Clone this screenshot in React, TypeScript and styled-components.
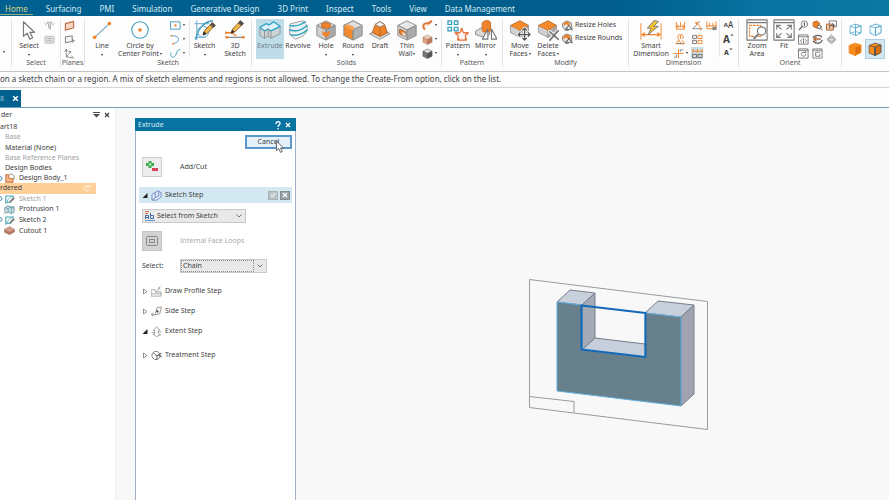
import React from "react";
import styled, { createGlobalStyle, css } from "styled-components";

const ORANGE = "#f08228";
const BLUE = "#3f9bbd";
const INK = "#4a4a4a";

const GlobalStyle = createGlobalStyle`
  * { box-sizing: border-box; }
  html, body, #root { height: 100%; }
  body {
    margin: 0;
    background: #f8f8f9;
    color: #3f3f3f;
    font: 7px/8px "Noto Sans", "Open Sans", sans-serif;
    overflow: hidden;
  }
  button, select { font: inherit; color: inherit; margin: 0; padding: 0; border: 0; background: none; }
  svg { display: block; flex: none; }
`;

const Page = styled.div`
  display: flex;
  flex-direction: column;
  height: 100vh;
  overflow: hidden;
`;

/* ---------- ribbon tabs ---------- */

const TabBar = styled.nav`
  display: flex;
  gap: 18px;
  height: 16px;
  flex: none;
  padding-left: 5px;
  background: linear-gradient(90deg, #00608f 0%, #005d8c 68%, #0872a0 85%, #0a78a4 100%);
  font-size: 8px;
  line-height: 18px;
`;

const TabLink = styled.a<{ $active?: boolean }>`
  height: 15px;
  color: ${(p) => (p.$active ? "#d6cf87" : "#d3e8f1")};
  text-decoration: none;
  white-space: nowrap;
  ${(p) =>
    p.$active &&
    css`
      margin: 0 -5px;
      padding: 0 5px;
      border-bottom: 1px solid #8fae7c;
    `}
`;

/* ---------- ribbon ---------- */

const Ribbon = styled.div`
  display: flex;
  height: 56px;
  flex: none;
  padding: 3px 0 4px;
  background: #fdfdfd;
  border-bottom: 1px solid #c4c4c4;
  overflow: hidden;
`;

const Group = styled.section<{ $w: number }>`
  display: flex;
  flex-direction: column;
  flex: none;
  width: ${(p) => p.$w}px;
  border-right: 1px solid #e2e2e2;
  &:last-child { border-right: 0; }
`;

const GroupBody = styled.div<{ $pad?: number }>`
  display: flex;
  height: 40px;
  padding-left: ${(p) => p.$pad ?? 0}px;
`;

const GroupLabel = styled.div`
  text-align: center;
  color: #5a5a5a;
  white-space: nowrap;
`;

const ToolButton = styled.button<{ $w: number; $active?: boolean }>`
  display: flex;
  flex-direction: column;
  align-items: center;
  flex: none;
  width: ${(p) => p.$w}px;
  height: 40px;
  line-height: 8px;
  text-align: center;
  white-space: nowrap;
  background: ${(p) => (p.$active ? "#bfdde9" : "transparent")};
  color: ${(p) => (p.$active ? "#6c7f89" : "#444")};
`;

const ToolText = styled.span`
  display: flex;
  align-items: center;
  flex-direction: column;
  margin-top: 1px;
`;

const Line = styled.span`
  display: flex;
  align-items: center;
  gap: 1px;
`;

const EdgeBody = styled.div`
  display: flex;
  height: 34px;
  align-items: flex-end;
  padding-left: 3px;
`;

const Caret = styled.i`
  width: 0;
  height: 0;
  border: 1px solid transparent;
  border-top: 2px solid #333;
  border-bottom: 0;
`;

const LowCaret = styled(Caret)`
  margin-top: 4px;
`;

const MiniGrid = styled.div<{ $cols: number; $w: number }>`
  display: grid;
  flex: none;
  grid-template-columns: repeat(${(p) => p.$cols}, 1fr);
  grid-auto-rows: 14px;
  width: ${(p) => p.$w}px;
  justify-items: center;
  align-content: start;
`;

const MiniButton = styled.button<{ $active?: boolean }>`
  display: flex;
  align-items: center;
  justify-content: center;
  gap: 2px;
  min-width: 12px;
  height: 12px;
  background: ${(p) => (p.$active ? "#c9dfe8" : "transparent")};
`;

const InnerRule = styled.span`
  flex: none;
  width: 1px;
  height: 38px;
  background: #e6e6e6;
`;

const Letter = styled.span<{ $size: number; $bold?: boolean }>`
  font-size: ${(p) => p.$size}px;
  font-weight: ${(p) => (p.$bold ? 700 : 500)};
  line-height: 12px;
`;

const LetterRow = styled.span`
  display: flex;
  align-items: flex-start;
  height: 12px;
`;

const TextTools = styled.div`
  display: flex;
  flex-direction: column;
  gap: 1px;
`;

const TextTool = styled.button`
  display: flex;
  align-items: center;
  gap: 2px;
  height: 12px;
  white-space: nowrap;
`;

const ViewGrid = styled.div`
  display: grid;
  grid-template-columns: 20px 20px;
  grid-auto-rows: 20px;
`;

const ViewButton = styled.button<{ $active?: boolean }>`
  display: grid;
  place-items: center;
  background: ${(p) => (p.$active ? "#d5e8f2" : "transparent")};
  border: ${(p) => (p.$active ? "1px solid #a9cfe2" : "0")};
`;

/* ---------- prompt and document tabs ---------- */

const Prompt = styled.div`
  height: 16px;
  flex: none;
  background: #fdfdfd;
  border-bottom: 1px solid #d3d3d3;
  font-size: 8px;
  line-height: 14px;
  white-space: nowrap;
`;

const DocBar = styled.div`
  display: flex;
  height: 20px;
  flex: none;
  background: #fdfdfd;
  border-bottom: 1px solid #6e9fb4;
  padding-top: 2px;
`;

const DocTab = styled.div`
  display: flex;
  align-items: center;
  justify-content: space-between;
  width: 21px;
  padding: 0 2px 0 0;
  background: #00618f;
  color: #9cc6da;
`;

const IconButton = styled.button`
  display: grid;
  place-items: center;
  min-width: 7px;
  height: 8px;
`;

/* ---------- work area ---------- */

const Work = styled.main`
  display: flex;
  flex: 1;
  min-height: 0;
`;

const Tree = styled.aside`
  width: 116px;
  flex: none;
  background: #fff;
  border-right: 1px solid #f0f1f2;
`;

const TreeHead = styled.div`
  display: flex;
  align-items: center;
  height: 14px;
  padding: 0 5px 0 1px;
  gap: 3px;
`;

const Grow = styled.span`
  flex: 1;
`;

const TreeList = styled.ul`
  display: grid;
  grid-auto-rows: 1fr;
  height: 114px;
  margin: 0;
  padding: 0 19px 0 0;
  list-style: none;
`;

const TreeRow = styled.li<{ $indent: number; $dim?: boolean; $on?: boolean }>`
  display: flex;
  align-items: center;
  padding-left: ${(p) => p.$indent}px;
  color: ${(p) => (p.$dim ? "#a2a2a2" : "#3c3c3c")};
  background: ${(p) => (p.$on ? "#fdd09a" : "transparent")};
  white-space: nowrap;
`;

const TreeIcon = styled.span`
  display: flex;
  align-items: center;
  justify-content: space-between;
  width: 17px;
  padding-right: 2px;
  margin-right: 2px;
`;

const Space = styled.div`
  display: flex;
  flex: 1;
  min-width: 0;
  padding: 10px 0 0 19px;
  background: #f8f8f9;
`;

const Dialog = styled.section`
  width: 161px;
  flex: none;
  background: #fff;
  border: solid #a3afc6;
  border-width: 0 1px;
`;

const DialogHead = styled.header`
  display: flex;
  align-items: center;
  gap: 3px;
  height: 13px;
  padding: 0 5px 0 3px;
  margin: 0 -1px;
  background: #0872a0;
  color: #d9ecf5;
`;

const DialogBody = styled.div`
  display: flex;
  flex-direction: column;
  padding: 4px 3px;
`;

const CancelButton = styled.button`
  align-self: flex-end;
  position: relative;
  width: 47px;
  height: 14px;
  background: #e3eff9;
  border: 2px solid #5b97cc;
  line-height: 10px;
`;

const Pointer = styled.svg`
  position: absolute;
  left: 28px;
  top: 3px;
  z-index: 1;
`;

const OptionRow = styled.div<{ $top: number; $dim?: boolean }>`
  display: grid;
  grid-template-columns: 38px 1fr;
  align-items: center;
  margin-top: ${(p) => p.$top}px;
  padding-left: 3px;
  color: ${(p) => (p.$dim ? "#a9a9a9" : "#444")};
`;

const SquareButton = styled.button<{ $dim?: boolean }>`
  display: grid;
  place-items: center;
  width: 20px;
  height: 20px;
  background: ${(p) => (p.$dim ? "#d3d3d3" : "#ededed")};
  border: 1px solid ${(p) => (p.$dim ? "#c4c4c4" : "#cccccc")};
`;

const StepSection = styled.div`
  margin-top: 10px;
`;

const StepList = styled.div`
  margin-top: 8px;
`;

const StepHead = styled.div<{ $open?: boolean; $h: number }>`
  display: flex;
  align-items: center;
  gap: 2px;
  height: ${(p) => p.$h}px;
  padding: 0 2px 0 3px;
  background: ${(p) => (p.$open ? "#d3e8f1" : "transparent")};
`;

const StepToggle = styled.button`
  display: flex;
  align-items: center;
  gap: 3px;
  white-space: nowrap;
`;

const StepBtn = styled.button<{ $strong?: boolean }>`
  display: grid;
  place-items: center;
  width: 10px;
  height: 9px;
  background: ${(p) => (p.$strong ? "#9ba3a8" : "#bcc5ca")};
  border: 1px solid ${(p) => (p.$strong ? "#858d92" : "#a8b1b6")};
`;

const SelectRow = styled.div`
  margin-top: 6px;
  padding-left: 3px;
`;

const SelectBox = styled.div<{ $w: number }>`
  display: flex;
  align-items: center;
  width: ${(p) => p.$w}px;
  height: 14px;
  padding: 0 3px 0 1px;
  background: #e9e9e9;
  border: 1px solid #c9c9c9;
`;

const SelectInput = styled.select<{ $focus?: boolean }>`
  appearance: none;
  flex: 1;
  min-width: 0;
  height: 10px;
  padding: 0 1px;
  margin-right: 4px;
  outline: ${(p) => (p.$focus ? "1px dotted #8a8a8a" : "0")};
`;

const Viewport = styled.div`
  flex: 1;
  min-width: 0;
  padding: 160px 0 0 232px;
  overflow: hidden;
`;

/* ---------- drawings ---------- */

type BoxProps = { top: string; left: string; right: string; line?: string; s?: number; children?: React.ReactNode };

const Cube = ({ top, left, right, line = "#888", s = 22, children }: BoxProps) => (
  <svg width={s} height={s} viewBox="0 0 24 24" stroke={line} strokeWidth="1" strokeLinejoin="round">
    <path d="M12 2 22 7 12 12 2 7Z" fill={top} />
    <path d="M2 7 12 12V23L2 18Z" fill={left} />
    <path d="M22 7 12 12V23L22 18Z" fill={right} />
    {children}
  </svg>
);

const Svg = ({ s = 22, children }: { s?: number; children: React.ReactNode }) => (
  <svg width={s} height={s} viewBox="0 0 24 24" fill="none" strokeLinejoin="round" strokeLinecap="round">
    {children}
  </svg>
);

const ArrowPath = "M6 3V19L10 15.5L13 22L16 20.5L13 14.5H18Z";
const pencil = (
  <g strokeWidth="1">
    <path d="M10 17 12 12 20 4 23 7 15 15Z" fill="#efb64b" stroke="#8d6423" />
    <path d="M18 6 20 4 23 7 21 9Z" fill="#555" stroke="#444" />
    <path d="M10 17 11 14 13 16Z" fill="#333" stroke="#333" />
  </g>
);

const SelectIcon = () => <Svg><path d={ArrowPath} fill="#fff" stroke="#777" strokeWidth="1.3" /></Svg>;
const LineIcon = () => (
  <Svg>
    <path d="M4 20 20 5" stroke="#7fa6b8" strokeWidth="1.3" />
    <circle cx="4" cy="20" r="2" fill={ORANGE} /><circle cx="20" cy="5" r="2" fill={ORANGE} />
  </Svg>
);
const CircleIcon = () => (
  <Svg><circle cx="12" cy="12" r="9" stroke={BLUE} strokeWidth="1.2" /><circle cx="12" cy="12" r="2" fill={ORANGE} /></Svg>
);
const SketchIcon = () => (
  <Svg>
    <path d="M3 2V22M1 5H16M1 20H12" stroke="#7eb9d2" strokeWidth="1.3" />
    <path d="M2 22C4 12 9 4 20 2" stroke={BLUE} strokeWidth="1.6" />
    <circle cx="10" cy="14" r="6" stroke="#7eb9d2" strokeWidth="1.2" />
    {pencil}
  </Svg>
);
const Sketch3DIcon = () => (
  <Svg>
    <path d="M2 20H22" stroke="#888" strokeWidth="1.4" />
    <path d="M3 15H8L13 18" stroke={ORANGE} strokeWidth="1.4" />
    <circle cx="2.5" cy="15" r="1.5" fill={ORANGE} /><circle cx="3" cy="20" r="1.5" fill={ORANGE} /><circle cx="21" cy="20" r="1.5" fill={ORANGE} />
    <g transform="translate(-2 -2)">{pencil}</g>
  </Svg>
);
const ExtrudeIcon = () => (
  <Svg>
    <path d="M1 9V18L6 21 10 18.500 13 21 23 16V8L13 13 10 11 6 13Z" fill="#cfd4d7" stroke="#8a8f92" />
    <path d="M1 9 8 5 11 6.500 16 3 23 8 13 13 10 11 6 13Z" fill="#def1f7" stroke="#2aa3c8" strokeWidth="1.4" />
    <path d="M6 13V21M13 13V21M10 11V18" stroke="#8a8f92" />
  </Svg>
);
const RevolveIcon = () => (
  <Svg>
    <path d="M4 5 18 2 22 8C23 15 18 20 9 22L3 17Z" fill="#edf1f3" stroke="#999" />
    <path d="M3 7C9 9 14 7 20 3M3 12C9 14 16 12 22 7M4 17C9 19 17 17 22 12" stroke="#26a0bd" strokeWidth="1.5" />
  </Svg>
);
const HoleIcon = () => (
  <Cube top="#e1e1e1" left="#cfcfcf" right="#a9a9a9">
    <ellipse cx="12" cy="7" rx="5" ry="3" fill={ORANGE} stroke="#c46418" />
    <path d="M8 13 12 15 16 13V17L12 20 8 17Z" fill={ORANGE} stroke="none" />
  </Cube>
);
const RoundIcon = () => (
  <Cube top="#e4e4e4" left="#f1892d" right="#aeb1b3">
    <path d="M2 8C4 5 6 5 8 6L14 9C13 10 12 11 12 13L2 8Z" fill="#f6a050" stroke="none" />
    <path d="M8 6 14 9 22 7 12 2 4 6Z" fill="#e0e0e0" stroke="none" />
    <path d="M2 7 12 2 22 7" fill="none" />
  </Cube>
);
const DraftIcon = () => (
  <Svg>
    <path d="M1 16 12 11 23 16 12 22Z" fill="#dedede" stroke="#888" />
    <path d="M7 6 12 3 17 6 20 15 12 19 4 15Z" fill={ORANGE} stroke="#a55d26" />
    <path d="M7 6 12 9 17 6 12 3Z" fill="#f7f0e8" stroke="#888" /><path d="M12 9V19" stroke="#b66729" />
  </Svg>
);
const ThinIcon = () => (
  <Cube top="#e7e7e7" left="#d7d7d7" right="#a9a9a9">
    <path d="M4 11 10 14V19L4 16Z" fill={ORANGE} stroke="#9c5c2a" />
    <path d="M7 14 10 16V19L7 17Z" fill="#eee" stroke="none" />
  </Cube>
);
const PatternIcon = () => (
  <Svg>
    <g fill="#e6f5f8" stroke="#329bb5" strokeWidth="1.3">
      <path d="M1 2H5V6H1ZM8 2H12V6H8ZM1 9H5V13H1ZM8 9H12V13H8Z" />
    </g>
    <path d="M16 11 18 15 23 15 20 18 21 23H12L12 18 9 15H14Z" stroke="#ec7643" strokeWidth="1.5" fill="#fff7f1" />
    <g fill="#ec7643"><circle cx="16" cy="11" r="1.3" /><circle cx="22" cy="15.500" r="1.3" /><circle cx="20.500" cy="22" r="1.3" /><circle cx="12.500" cy="22" r="1.3" /><circle cx="10" cy="15.500" r="1.3" /></g>
  </Svg>
);
const MirrorIcon = () => (
  <Svg>
    <path d="M1 13 8 9 16 13V17L9 20 1 17Z" fill="#d9d9d9" stroke="#888" />
    <path d="M8 4C10 1 16 1 17 4V13C14 15 10 15 8 13Z" fill={ORANGE} stroke="#c66b20" />
    <path d="M14 11V22H8ZM18 11V22H24Z" fill="#fff" stroke="#777" strokeWidth="1.2" />
  </Svg>
);
const FaceBase = (
  <>
    <path d="M2 7 12 2 21 7V15L12 20 2 15Z" fill="#d1d1d1" stroke="#999" />
    <path d="M12 12 21 7V15L12 20Z" fill="#adadad" stroke="#999" />
    <path d="M2 7 12 2 21 7 12 12Z" fill="#f58a2a" stroke="#d17424" />
  </>
);
const movePath = "M17 10V23M10 17H23M15 12 17 10 19 12M15 21 17 23 19 21M12 15 10 17 12 19M21 15 23 17 21 19";
const MoveIcon = () => (
  <Svg>{FaceBase}<path d={movePath} stroke="#fff" strokeWidth="3" /><path d={movePath} stroke="#555" strokeWidth="1.4" /></Svg>
);
const DeleteIcon = () => (
  <Svg>{FaceBase}<path d="M14 14 23 22M23 13 14 23" stroke="#fff" strokeWidth="4" /><path d="M14 14 23 22M23 13 14 23" stroke="#777" strokeWidth="2" /></Svg>
);
const ResizeIcon = ({ round }: { round?: boolean }) => (
  <Svg s={11}>
    <path d="M2 7 10 2 20 6 22 20 7 22 2 16Z" fill="#e6e6e6" stroke="#777" strokeWidth="2" />
    <path d={round ? "M3 8C10 0 19 4 19 13L13 16C14 10 9 8 3 14Z" : "M4 7C8 2 17 3 17 11L12 13C12 8 8 8 4 14Z"} fill={ORANGE} />
    <path d="M9 22 15 11 22 22M9 17V22H14" stroke="#555" strokeWidth="2" />
  </Svg>
);
const SmartIcon = () => (
  <Svg>
    <path d="M1 5V22M23 5V22" stroke={ORANGE} />
    <path d="M2 17H22M5 15 2 17 5 19M19 15 22 17 19 19" stroke={ORANGE} strokeWidth="1.2" />
    <path d="M15 2 8 10H12L9 17 20 8H15L20 3Z" fill="#f2c033" stroke="#777" />
  </Svg>
);
const WindowIcon = ({ fit }: { fit?: boolean }) => (
  <Svg>
    <path d="M1 1H23V23H1ZM1 4H23" stroke="#777" strokeWidth="1.2" fill="#fff" />
    {fit ? (
      <path d="M9 11 4 7M4 11V7H8M15 11 20 7M20 11V7H16M9 16 4 20M4 16V20H8M15 16 20 20M20 16V20H16" stroke="#777" strokeWidth="1.2" />
    ) : (
      <>
        <path d="M4 7H16V19H4Z" stroke={ORANGE} strokeWidth="1.2" strokeDasharray="2 2" />
        <circle cx="17" cy="13" r="4.500" fill="#fff" stroke="#777" strokeWidth="1.3" />
        <path d="M13 17 9 21" stroke="#777" strokeWidth="2" />
      </>
    )}
  </Svg>
);

const miniPaths: Record<string, React.ReactNode> = {
  filter: <><path d="M7 5H17L14 11V20L10 17V11Z" fill="#ddd" stroke="#aaa" strokeWidth="2" /><path d="M2 7 5 11M22 7 19 11" stroke="#aaa" strokeWidth="2" /></>,
  card: <><rect x="2" y="5" width="20" height="15" rx="2" fill="#e5e5e5" stroke="#b9b9b9" strokeWidth="2" /><path d="M7 10H17M7 15H17" stroke="#aaa" strokeWidth="2" /></>,
  plane: <path d="M3 8 21 3V17L3 22Z" fill="#f5d5bf" stroke="#bd6d47" strokeWidth="2.5" />,
  plane2: <path d="M4 6 18 4V16L4 19ZM18 13 23 14 18 18" fill="#f4f4f4" stroke="#777" strokeWidth="2" />,
  axes: <path d="M5 3V19L20 22M5 19 15 8M2 7 5 3 8 7M11 8H15V12M17 18 21 22" stroke="#777" strokeWidth="2" strokeDasharray="5 3" />,
  rect: <><path d="M2 4H22V20H2Z" stroke={BLUE} strokeWidth="2" /><circle cx="12" cy="12" r="2.5" fill={ORANGE} /></>,
  arc: <><path d="M3 4C22 1 24 18 8 21" stroke={BLUE} strokeWidth="2" /><circle cx="3" cy="4" r="2" fill={ORANGE} /><circle cx="7" cy="21" r="2" fill={ORANGE} /></>,
  curve: <path d="M2 11C0 20 7 24 12 16C17 8 14 4 22 3" stroke={BLUE} strokeWidth="2" />,
  sweep: <><path d="M5 19C0 12 6 5 14 8L20 3" stroke="#d9743c" strokeWidth="5" /><path d="M5 15C5 9 10 9 15 11" stroke="#fac29b" strokeWidth="3" /></>,
  dimA: <path d="M3 5V20H21V5M3 14H21M7 11 3 14 7 17M17 11 21 14 17 17M12 6V14" stroke={ORANGE} strokeWidth="2" />,
  dimB: <><path d="M2 19 17 3M2 19H22" stroke="#888" strokeWidth="2" /><path d="M8 6C15 8 19 13 19 22M13 5 8 6 11 11" stroke={ORANGE} strokeWidth="2" /></>,
  dimC: <><path d="M2 4V19H22V4M2 13H22M8 7V13M15 7V13" stroke={ORANGE} strokeWidth="2" /><rect x="14" y="15" width="9" height="7" fill="#888" /></>,
  dimD: <><path d="M7 10A6 6 0 1 1 17 10M12 3V10M3 21 8 12 12 19M2 21H21L16 14" stroke={ORANGE} strokeWidth="2" /><path d="M6 21H18" stroke="#888" strokeWidth="2" /></>,
  dimE: <><path d="M2 3H10V10H2ZM2 14H10V21H2Z" fill="#eee" stroke="#777" strokeWidth="2" /><path d="M14 3H22V10H14ZM14 14H22V21H14Z" stroke={ORANGE} strokeWidth="2" /></>,
  dimF: <><path d="M12 3V21M2 12H22" stroke={ORANGE} strokeWidth="2" /><path d="M3 20H8V15M16 8V4H22" stroke="#888" strokeWidth="2" /></>,
  dimG: <><path d="M2 3V10M22 3V10M2 7H22M12 3V10" stroke={ORANGE} strokeWidth="2" /><path d="M2 14H10V21H2ZM14 14H22V21H14Z" fill="#ddd" stroke="#666" strokeWidth="2" /></>,
  lens: <><circle cx="14" cy="9" r="7" stroke="#777" strokeWidth="2" /><path d="M9 14 3 21M14 6V12" stroke="#555" strokeWidth="2.5" /></>,
  lensCube: <><path d="M3 5 10 2 16 6V15L10 18 3 14Z" fill={ORANGE} stroke="#b86622" strokeWidth="2" /><circle cx="16" cy="15" r="4" fill="#fff" stroke="#555" strokeWidth="2" /><path d="M19 18 22 22" stroke="#555" strokeWidth="2" /></>,
  prev: <><path d="M8 2H23V15H8Z" stroke="#777" strokeWidth="2" /><path d="M2 9H16V22H2Z" fill="#f7c7a0" stroke="#9e5c31" strokeWidth="2" /><path d="M8 18V12H18M15 8 19 12 15 16" stroke="#555" strokeWidth="2" /></>,
  pan: <path d="M2 2H22V22H2ZM2 6H22M12 10V20M8 12 5 15 8 18M16 12 19 15 16 18" stroke="#777" strokeWidth="2" />,
  spin: <><path d="M3 7C8 2 16 2 21 6M3 16C10 23 19 21 22 14" stroke="#666" strokeWidth="3" /><path d="M5 11H18M9 7 4 11 9 15" stroke="#b66a43" strokeWidth="3" /></>,
  orbit: <path d="M12 2 16 7 22 12 16 17 12 22 8 17 2 12 8 7ZM7 8H17V16H7Z" fill="#ddd" stroke="#999" strokeWidth="2" />,
  refresh: <><path d="M2 2H22V22H2ZM2 5H22" stroke="#777" strokeWidth="2" /><path d="M16 10C9 6 5 13 9 17C14 20 17 16 17 14M13 10H17V7" stroke="#777" strokeWidth="2" /></>,
  rotate: <><path d="M2 2H22V22H2ZM2 5H22" stroke="#777" strokeWidth="2" strokeDasharray="5 2" /><path d="M17 9H8V18H17V14" stroke="#777" strokeWidth="2" /></>,
};
const Mini = ({ name }: { name: string }) => <Svg s={11}>{miniPaths[name]}</Svg>;
const GreyCube = ({ dark }: { dark?: boolean }) => (
  <Cube s={11} top={dark ? "#ddd" : "#f0d1bc"} left={dark ? "#777" : "#e0a17d"} right={dark ? "#555" : "#b97856"} line={dark ? "#444" : "#a2765e"} />
);
const Mark = ({ d }: { d: string }) => (
  <svg width="4" height="4" viewBox="0 0 4 4"><path d={d} stroke="#777" fill="none" /></svg>
);
const ViewCube = ({ kind }: { kind: "wire" | "hidden" | "solid" | "edge" }) => {
  const wire = kind === "wire" || kind === "hidden";
  return (
    <svg width={wire ? 13 : 14} height={wire ? 13 : 14} viewBox="0 0 24 24" strokeWidth="1.5" strokeLinejoin="round" stroke={wire ? "#58a9c9" : kind === "edge" ? "#6d5847" : "#ee8a22"}>
      <path d="M2 6 12 2 22 5V18L12 23 2 19Z" fill={wire ? "#fff" : "#fb8b17"} />
      <path d="M12 9 22 5V18L12 23Z" fill={wire ? "#fff" : "#df6f0b"} />
      <path d="M2 6 12 9 22 5M12 9V23" fill="none" />
      {kind === "wire" && <path d="M12 2V16L2 19M12 16 22 18" fill="none" />}
      {kind === "hidden" && <path d="M12 2V16L2 19M12 16 22 18" fill="none" strokeDasharray="2 3" />}
      {kind === "edge" && <path d="M12 9V23" stroke="#456" strokeWidth="2.5" />}
    </svg>
  );
};

const Cross = ({ s = 6, color = "#444" }: { s?: number; color?: string }) => (
  <svg width={s} height={s} viewBox="0 0 6 6"><path d="M1 1 5 5M5 1 1 5" stroke={color} strokeWidth="1.3" /></svg>
);
const SketchMini = () => (
  <Svg s={10}>
    <path d="M2 5V22M2 5H20M2 20H13" stroke="#41a2ab" strokeWidth="2.5" />
    <path d="M5 20C7 10 12 7 21 6" stroke="#55b3ba" strokeWidth="2" />
    <path d="M11 18 20 8 23 11 14 20Z" fill="#777" stroke="#777" />
  </Svg>
);
const BodyMini = () => (
  <Svg s={10}><path d="M2 4H9V12L19 14V22H2Z" fill="#f6b487" stroke="#c8743e" strokeWidth="2.5" /><path d="M12 4 17 2 22 7V15" stroke="#777" strokeWidth="2" /></Svg>
);
const ProtrusionMini = () => (
  <Svg s={11}><path d="M2 8 8 4 14 6 22 6V18L16 21 10 18 3 20Z" fill="#d2dfe2" stroke="#7a9ca5" strokeWidth="2" /><path d="M3 8 9 10 14 7 21 9M9 10V18M16 10V20" stroke="#5ba2b4" strokeWidth="2" /></Svg>
);
const CutoutMini = () => (
  <Svg s={11}><path d="M1 10 12 4 23 10V15L12 21 1 16Z" fill="#b87460" stroke="#9c7468" /><path d="M1 10 12 4 23 10 12 15Z" fill="#d5a18e" stroke="#ad8576" /></Svg>
);
const Bullet = () => <svg width="3" height="5" viewBox="0 0 3 5"><circle cx="0" cy="2.5" r="2" fill="none" stroke="#4d93b5" /></svg>;
const Triangle = ({ open }: { open?: boolean }) => (
  <svg width="6" height="7" viewBox="0 0 6 7">
    {open ? <path d="M5.5 1V6H0.5Z" fill="#222" /> : <path d="M1.5 1 5 3.5 1.5 6Z" fill="none" stroke="#777" strokeWidth=".8" />}
  </svg>
);
const Chevron = () => <svg width="6" height="4" viewBox="0 0 6 4"><path d="M.5.5 3 3 5.5.5" fill="none" stroke="#777" /></svg>;
const PlusMinus = () => (
  <svg width="14" height="14" viewBox="0 0 14 14"><path d="M5 1V8M1 4.500H9" stroke="#3daa4c" strokeWidth="3" /><path d="M5 3V6M3.500 4.500H6.500" stroke="#c5f2c8" /><rect x="7" y="8" width="6" height="3" fill="#d94254" /></svg>
);
const LoopIcon = () => (
  <svg width="12" height="10" viewBox="0 0 12 10" fill="none" stroke="#888"><rect x=".5" y=".5" width="11" height="9" rx="1" /><rect x="3.5" y="3.5" width="5" height="3" /></svg>
);
const StepSketch = () => <Svg s={11}><path d="M3 9 15 2 22 6V15L13 22H3ZM9 7V17L17 13V3M9 17 3 22" fill="#e8f0fa" stroke="#7185c5" strokeWidth="2" /></Svg>;
const ABIcon = () => (
  <svg width="12" height="12" viewBox="0 0 12 12" fill="none">
    <path d="M1.500 9V5.500H4.500V9M1.500 7.500H4.500M6.500 3V8.500H9.500V5.500H6.500" stroke="#456ea8" /><path d="M1 1.500H5M1 3.500H4" stroke="#dd6847" /><path d="M1 10.500H11" stroke="#5a9ad2" />
  </svg>
);
const DrawIcon = () => <Svg s={11}><path d="M1 8H9V13H22V22H1ZM1 17H22M12 13 20 1M16 4 20 7" stroke="#999" strokeWidth="1.8" /></Svg>;
const SideIcon = () => <Svg s={11}><path d="M1 19H9L13 4 23 2 19 17 9 19M4 15 1 19 5 22" stroke="#888" strokeWidth="1.8" /><circle cx="14" cy="12" r="2.5" fill="#444" /></Svg>;
const ExtentIcon = () => <Svg s={11}><path d="M5 10 12 2 20 9H16V17L21 19 12 23 4 18H8V10ZM2 14H6M18 13H23" stroke="#999" strokeWidth="1.8" strokeDasharray="4 1" /></Svg>;
const TreatIcon = () => <Svg s={11}><circle cx="11" cy="12" r="9" stroke="#777" strokeWidth="2" /><path d="M6 7 13 13 22 7M13 13V20M16 11 23 15" stroke="#555" strokeWidth="2" /></Svg>;

const Model = () => (
  <svg width="181" height="154" viewBox="528 278 181 154" fill="none" strokeLinejoin="round">
    <path d="M529.5 279.5 707.5 301.5V429.5L529.5 407.5Z" stroke="#999b9e" />
    <path d="M529.5 396.5 574 401.5V412.5" stroke="#999b9e" />
    <g stroke="#777f8b" strokeWidth="1">
      <path d="M557 302 570 290 595 293 582 305Z" fill="#c8d0dc" />
      <path d="M582 305 595 293V338L582 350Z" fill="#a3aab5" />
      <path d="M582 350 595 338 645 344V357Z" fill="#c6cfdb" />
      <path d="M645 313 658 301 694 305 681 317Z" fill="#c8d0dc" />
      <path d="M681 317 694 305V394L681 406Z" fill="#a0a4b0" />
    </g>
    <path d="M557 302 582 305V350L645 357V313L681 317V406L557 391Z" fill="#687f8c" stroke="#5fafe0" />
    <path d="M581.5 305.5 645.5 313V357L581.5 349.5Z" stroke="#1468b8" strokeWidth="2" />
  </svg>
);

/* ---------- composition ---------- */

type ToolProps = { w: number; icon: React.ReactNode; lines: string[]; caret?: "low" | "inline"; active?: boolean };

const Tool = ({ w, icon, lines, caret, active }: ToolProps) => (
  <ToolButton type="button" $w={w} $active={active}>
    {icon}
    <ToolText>
      {lines.map((t, i) => (
        <Line key={t}>
          {t}
          {caret === "inline" && i === lines.length - 1 && <Caret />}
        </Line>
      ))}
      {caret === "low" && <LowCaret />}
    </ToolText>
  </ToolButton>
);

const MiniTool = ({ name, caret, active }: { name: string; caret?: boolean; active?: boolean }) => (
  <MiniButton type="button" aria-label={name} $active={active}>
    {name === "cubeA" ? <GreyCube /> : name === "cubeB" ? <GreyCube dark /> : <Mini name={name} />}
    {caret && <Caret />}
  </MiniButton>
);

const tabs = ["Home", "Surfacing", "PMI", "Simulation", "Generative Design", "3D Print", "Inspect", "Tools", "View", "Data Management"];

export default function App() {
  return (
    <Page>
      <GlobalStyle />
      <TabBar>
        {tabs.map((t, i) => <TabLink key={t} href="#" $active={i === 0}>{t}</TabLink>)}
      </TabBar>

      <Ribbon>
        <Group $w={12}><EdgeBody><Caret /></EdgeBody></Group>
        <Group $w={49}>
          <GroupBody $pad={3}>
            <Tool w={28} icon={<SelectIcon />} lines={["Select"]} caret="low" />
            <MiniGrid $cols={1} $w={12}><MiniTool name="filter" /><MiniTool name="card" /></MiniGrid>
          </GroupBody>
          <GroupLabel>Select</GroupLabel>
        </Group>
        <Group $w={24}>
          <GroupBody $pad={1}>
            <MiniGrid $cols={1} $w={14}><MiniTool name="plane" /><MiniTool name="plane2" /><MiniTool name="axes" /></MiniGrid>
          </GroupBody>
          <GroupLabel>Planes</GroupLabel>
        </Group>
        <Group $w={167}>
          <GroupBody $pad={4}>
            <Tool w={26} icon={<LineIcon />} lines={["Line"]} caret="low" />
            <Tool w={50} icon={<CircleIcon />} lines={["Circle by", "Center Point"]} caret="inline" />
            <MiniGrid $cols={1} $w={24}><MiniTool name="rect" caret /><MiniTool name="arc" caret /><MiniTool name="curve" caret /></MiniGrid>
            <InnerRule />
            <Tool w={29} icon={<SketchIcon />} lines={["Sketch"]} caret="low" />
            <Tool w={32} icon={<Sketch3DIcon />} lines={["3D", "Sketch"]} />
          </GroupBody>
          <GroupLabel>Sketch</GroupLabel>
        </Group>
        <Group $w={190}>
          <GroupBody $pad={4}>
            <Tool w={28} icon={<ExtrudeIcon />} lines={["Extrude"]} active />
            <Tool w={28} icon={<RevolveIcon />} lines={["Revolve"]} />
            <Tool w={28} icon={<HoleIcon />} lines={["Hole"]} caret="low" />
            <Tool w={26} icon={<RoundIcon />} lines={["Round"]} caret="low" />
            <Tool w={28} icon={<DraftIcon />} lines={["Draft"]} />
            <Tool w={26} icon={<ThinIcon />} lines={["Thin", "Wall"]} caret="inline" />
            <MiniGrid $cols={1} $w={18}><MiniTool name="sweep" caret /><MiniTool name="cubeA" caret /><MiniTool name="cubeB" caret /></MiniGrid>
          </GroupBody>
          <GroupLabel>Solids</GroupLabel>
        </Group>
        <Group $w={61}>
          <GroupBody $pad={2}>
            <Tool w={28} icon={<PatternIcon />} lines={["Pattern"]} caret="low" />
            <Tool w={27} icon={<MirrorIcon />} lines={["Mirror"]} caret="low" />
          </GroupBody>
          <GroupLabel>Pattern</GroupLabel>
        </Group>
        <Group $w={126}>
          <GroupBody $pad={3}>
            <Tool w={28} icon={<MoveIcon />} lines={["Move", "Faces"]} caret="inline" />
            <Tool w={28} icon={<DeleteIcon />} lines={["Delete", "Faces"]} caret="inline" />
            <TextTools>
              <TextTool type="button"><ResizeIcon />Resize Holes</TextTool>
              <TextTool type="button"><ResizeIcon round />Resize Rounds</TextTool>
            </TextTools>
          </GroupBody>
          <GroupLabel>Modify</GroupLabel>
        </Group>
        <Group $w={110}>
          <GroupBody $pad={3}>
            <Tool w={38} icon={<SmartIcon />} lines={["Smart", "Dimension"]} />
            <MiniGrid $cols={1} $w={20}><MiniTool name="dimA" /><MiniTool name="dimD" /><MiniTool name="dimF" caret /></MiniGrid>
            <MiniGrid $cols={2} $w={29}>
              <MiniTool name="dimB" /><MiniTool name="dimC" />
              <MiniTool name="dimE" /><span />
              <MiniTool name="dimG" active />
            </MiniGrid>
            <InnerRule />
            <MiniGrid $cols={1} $w={17}>
              <MiniButton type="button" aria-label="Font"><LetterRow><Letter $size={6} $bold>A</Letter><Letter $size={8}>A</Letter></LetterRow></MiniButton>
              <MiniButton type="button" aria-label="Larger text"><LetterRow><Letter $size={10} $bold>A</Letter><Mark d="M1 3 2 1 3 3" /></LetterRow></MiniButton>
              <MiniButton type="button" aria-label="Smaller text"><LetterRow><Letter $size={7} $bold>A</Letter><Mark d="M1 1 2 3 3 1" /></LetterRow></MiniButton>
            </MiniGrid>
          </GroupBody>
          <GroupLabel>Dimension</GroupLabel>
        </Group>
        <Group $w={103}>
          <GroupBody $pad={4}>
            <Tool w={28} icon={<WindowIcon />} lines={["Zoom", "Area"]} />
            <Tool w={26} icon={<WindowIcon fit />} lines={["Fit"]} />
            <MiniGrid $cols={3} $w={41}>
              {["lens", "lensCube", "prev", "pan", "spin", "orbit", "refresh", "rotate"].map((n) => <MiniTool key={n} name={n} />)}
            </MiniGrid>
          </GroupBody>
          <GroupLabel>Orient</GroupLabel>
        </Group>
        <Group $w={47}>
          <GroupBody $pad={3}>
            <ViewGrid>
              <ViewButton type="button" aria-label="Wireframe"><ViewCube kind="wire" /></ViewButton>
              <ViewButton type="button" aria-label="Hidden edges"><ViewCube kind="hidden" /></ViewButton>
              <ViewButton type="button" aria-label="Shaded"><ViewCube kind="solid" /></ViewButton>
              <ViewButton type="button" aria-label="Shaded with edges" $active><ViewCube kind="edge" /></ViewButton>
            </ViewGrid>
          </GroupBody>
        </Group>
      </Ribbon>

      <Prompt>on a sketch chain or a region. A mix of sketch elements and regions is not allowed. To change the Create-From option, click on the list.</Prompt>
      <DocBar>
        <DocTab>8<IconButton type="button" aria-label="Close document"><Cross s={7} color="#fff" /></IconButton></DocTab>
      </DocBar>

      <Work>
        <Tree>
          <TreeHead>
            der<Grow />
            <IconButton type="button" aria-label="Panel options"><svg width="7" height="6" viewBox="0 0 7 6"><path d="M0 .5H7" stroke={INK} /><path d="M0 2H7L3.5 5.5Z" fill={INK} /></svg></IconButton>
            <IconButton type="button" aria-label="Close panel"><Cross /></IconButton>
          </TreeHead>
          <TreeList>
            <TreeRow $indent={0}>art18</TreeRow>
            <TreeRow $indent={5} $dim>Base</TreeRow>
            <TreeRow $indent={5}>Material (None)</TreeRow>
            <TreeRow $indent={5} $dim>Base Reference Planes</TreeRow>
            <TreeRow $indent={5}>Design Bodies</TreeRow>
            <TreeRow $indent={0}><TreeIcon><Bullet /><BodyMini /></TreeIcon>Design Body_1</TreeRow>
            <TreeRow $indent={0} $on>rdered<Grow /><svg width="14" height="7" viewBox="0 0 14 7"><path d="M7 2A2.5 2.5 0 1 0 7 5M5 2H8V0" fill="none" stroke="#fff3e3" /></svg></TreeRow>
            <TreeRow $indent={0} $dim><TreeIcon><Bullet /><SketchMini /></TreeIcon>Sketch 1</TreeRow>
            <TreeRow $indent={0}><TreeIcon><span /><ProtrusionMini /></TreeIcon>Protrusion 1</TreeRow>
            <TreeRow $indent={0}><TreeIcon><Bullet /><SketchMini /></TreeIcon>Sketch 2</TreeRow>
            <TreeRow $indent={0}><TreeIcon><span /><CutoutMini /></TreeIcon>Cutout 1</TreeRow>
          </TreeList>
        </Tree>

        <Space>
          <Dialog aria-label="Extrude">
            <DialogHead>
              Extrude<Grow />
              <IconButton type="button" aria-label="Help"><svg width="6" height="9" viewBox="0 0 6 9"><path d="M1 3C1 0 5 0 5 2.5C5 4 3 4 3 6M3 7V8.500" fill="none" stroke="#fff" strokeWidth="1.3" /></svg></IconButton>
              <IconButton type="button" aria-label="Close"><Cross color="#fff" /></IconButton>
            </DialogHead>
            <DialogBody>
              <CancelButton type="button">
                Cancel
                <Pointer width="10" height="13" viewBox="4 1 16 22"><path d={ArrowPath} fill="#fff" stroke="#555" strokeWidth="1.5" /></Pointer>
              </CancelButton>
              <OptionRow $top={8}>
                <SquareButton type="button" aria-labelledby="addcut-label"><PlusMinus /></SquareButton>
                <span id="addcut-label">Add/Cut</span>
              </OptionRow>
              <StepSection>
                <StepHead $open $h={16}>
                  <StepToggle type="button" aria-expanded="true"><Triangle open /><StepSketch />Sketch Step</StepToggle>
                  <Grow />
                  <StepBtn type="button" aria-label="Accept"><svg width="6" height="6" viewBox="0 0 6 6"><path d="M1 3 2.5 5 5 1" fill="none" stroke="#fff" /></svg></StepBtn>
                  <StepBtn type="button" aria-label="Cancel step" $strong><Cross color="#fff" /></StepBtn>
                </StepHead>
                <SelectRow>
                  <SelectBox $w={104}>
                    <ABIcon />
                    <SelectInput aria-label="Create-From" defaultValue="s"><option value="s">Select from Sketch</option></SelectInput>
                    <Chevron />
                  </SelectBox>
                </SelectRow>
                <OptionRow $top={8} $dim>
                  <SquareButton type="button" $dim disabled aria-labelledby="loops-label"><LoopIcon /></SquareButton>
                  <span id="loops-label">Internal Face Loops</span>
                </OptionRow>
                <OptionRow $top={8}>
                  <label htmlFor="select-kind">Select:</label>
                  <SelectBox $w={87}>
                    <SelectInput id="select-kind" $focus defaultValue="c"><option value="c">Chain</option></SelectInput>
                    <Chevron />
                  </SelectBox>
                </OptionRow>
              </StepSection>
              <StepList>
                <StepHead $h={20}><StepToggle type="button"><Triangle /><DrawIcon />Draw Profile Step</StepToggle></StepHead>
                <StepHead $h={20}><StepToggle type="button"><Triangle /><SideIcon />Side Step</StepToggle></StepHead>
                <StepHead $h={20}><StepToggle type="button"><Triangle open /><ExtentIcon />Extent Step</StepToggle></StepHead>
                <StepHead $h={28}><StepToggle type="button"><Triangle /><TreatIcon />Treatment Step</StepToggle></StepHead>
              </StepList>
            </DialogBody>
          </Dialog>
          <Viewport><Model /></Viewport>
        </Space>
      </Work>
    </Page>
  );
}
